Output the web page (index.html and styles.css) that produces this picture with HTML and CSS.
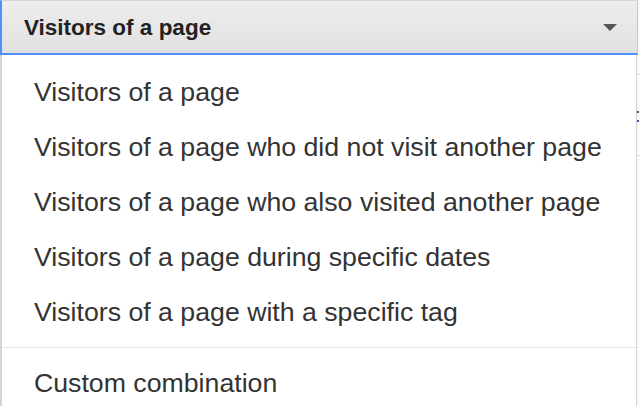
FILE: index.html
```html
<!DOCTYPE html>
<html>
<head>
<meta charset="utf-8">
<link rel="stylesheet" href="styles.css">
</head>
<body>
<div class="page">
  <div class="backdrop">
    <div class="bg-line l1"></div>
    <div class="bg-dots">:</div>
    <div class="bg-line l2"></div>
  </div>
  <div class="select">
    <button class="select-btn">
      <span class="select-label">Visitors of a page</span>
      <svg class="caret" width="14" height="8" viewBox="0 0 14 8"><path d="M0 0 H14 L7 7 Z" fill="#555"/></svg>
    </button>
    <ul class="menu">
      <li class="item">Visitors of a page</li>
      <li class="item">Visitors of a page who did not visit another page</li>
      <li class="item">Visitors of a page who also visited another page</li>
      <li class="item">Visitors of a page during specific dates</li>
      <li class="item">Visitors of a page with a specific tag</li>
      <li class="sep"></li>
      <li class="item">Custom combination</li>
    </ul>
  </div>
</div>
</body>
</html>
```
FILE: styles.css
```css
html, body {
  margin: 0;
  padding: 0;
  background: #fff;
  font-family: "Liberation Sans", Arial, sans-serif;
}
.page {
  position: relative;
  width: 640px;
  height: 406px;
  overflow: hidden;
}
.backdrop {
  position: absolute;
  left: 637px;
  top: 0;
  width: 3px;
  height: 406px;
  background: #fafafa;
}
.bg-line {
  position: absolute;
  left: 0;
  width: 3px;
  height: 1px;
  background: #ddd;
}
.l1 { top: 74px; }
.l2 { top: 155px; }
.bg-dots {
  position: absolute;
  left: -2px;
  top: 104px;
  font-size: 20px;
  color: #444;
}
.select {
  position: relative;
  width: 638px;
}
.select-btn {
  display: flex;
  align-items: center;
  justify-content: space-between;
  box-sizing: border-box;
  width: 638px;
  height: 55px;
  margin: 0;
  padding: 0 20px 0 22px;
  border: 0;
  border-top: 1px solid #d6d6d6;
  border-left: 2px solid #4d90fe;
  border-right: 1px solid #c6c6c6;
  border-bottom: 2px solid #4d90fe;
  background: linear-gradient(#ededed, #e1e1e1);
  font-family: inherit;
  font-size: 22.5px;
  font-weight: bold;
  color: #222;
}
.select-label {
  padding-top: 1px;
}
.caret {
  margin-top: 2px;
}
.menu {
  list-style: none;
  margin: 0;
  padding: 10px 0 0 0;
  box-sizing: border-box;
  width: 637px;
  height: 360px;
  background: #fff;
  border-left: 2px solid #d4d4d4;
  border-right: 1px solid #d4d4d4;
}
.item {
  padding: 0 0 0 32px;
  height: 55px;
  line-height: 55px;
  font-size: 26.7px;
  color: #333;
  white-space: nowrap;
}
.sep {
  height: 1px;
  margin: 7px 0 8px 0;
  background: #e5e5e5;
}
```
